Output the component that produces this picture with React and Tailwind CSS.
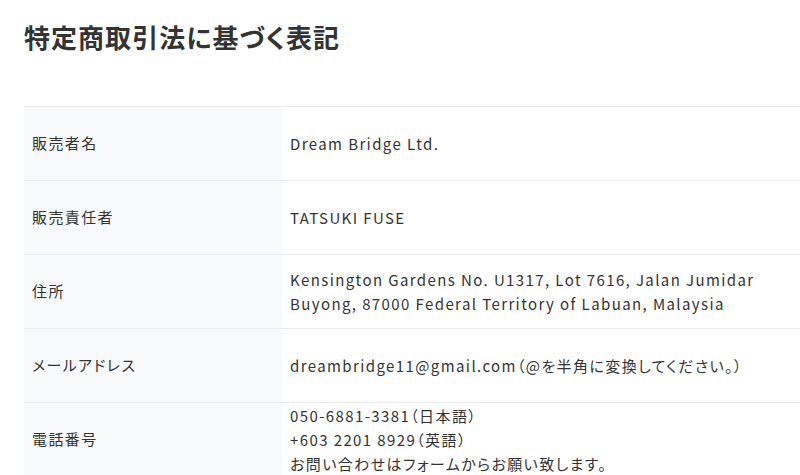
const rows = [
  { label: "販売者名", value: ["Dream Bridge Ltd."] },
  { label: "販売責任者", value: ["TATSUKI FUSE"] },
  {
    label: "住所",
    value: [
      "Kensington Gardens No. U1317, Lot 7616, Jalan Jumidar",
      "Buyong, 87000 Federal Territory of Labuan, Malaysia",
    ],
  },
  {
    label: "メールアドレス",
    value: ["dreambridge11@gmail.com（@を半角に変換してください。）"],
  },
  {
    label: "電話番号",
    value: [
      "050-6881-3381（日本語）",
      "+603 2201 8929（英語）",
      "お問い合わせはフォームからお願い致します。",
    ],
  },
];

export default function App() {
  return (
    <div
      className="w-[800px] h-[475px] overflow-hidden bg-white text-[#333] pl-6 [font-feature-settings:'palt']"
      style={{ fontFamily: '"Noto Sans CJK JP", "Noto Sans", sans-serif' }}
    >
      <h1 className="h-[76px] pt-[18px] text-[26px] leading-[38px] font-bold tracking-[0.04em]">
        特定商取引法に基づく表記
      </h1>
      <div className="mt-[30px] border-t border-[#ececec]">
        {rows.map((row) => (
          <div key={row.label} className="flex border-b border-[#ececec]">
            <div className="w-[258px] shrink-0 min-h-[73px] bg-[#f8f9fa] px-2 flex items-center text-[15px] tracking-[1.4px]">
              {row.label}
            </div>
            <div className="flex-1 min-h-[73px] px-2 flex flex-col justify-center text-[15px] leading-6 tracking-[1.4px]">
              {row.value.map((line) => (
                <div key={line} className="whitespace-nowrap">
                  {line}
                </div>
              ))}
            </div>
          </div>
        ))}
      </div>
    </div>
  );
}
